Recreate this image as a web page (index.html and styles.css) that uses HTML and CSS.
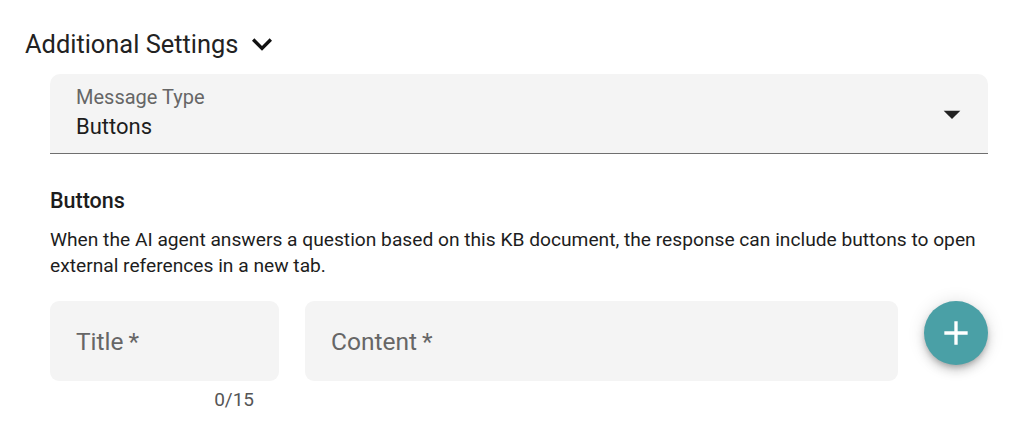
FILE: index.html
```html
<!DOCTYPE html>
<html>
<head>
<meta charset="utf-8">
<link rel="stylesheet" href="styles.css">
</head>
<body>
<div class="page">
  <div class="section-head">
    <span class="section-title">Additional Settings</span>
    <svg class="chev" width="24" height="24" viewBox="0 0 24 24"><path d="M7.41 8.59 12 13.17l4.59-4.58L18 10l-6 6-6-6z" fill="#111"/></svg>
  </div>
  <div class="content">
    <div class="select">
      <div class="select-text">
        <div class="select-label">Message Type</div>
        <div class="select-value">Buttons</div>
      </div>
      <svg class="select-arrow" width="24" height="24" viewBox="0 0 24 24"><path d="M7 10l5 5 5-5z" fill="#222"/></svg>
    </div>
    <h3 class="sub-title">Buttons</h3>
    <p class="desc">When the AI agent answers a question based on this KB document, the response can include buttons to open external references in a new tab.</p>
    <div class="row">
      <div class="col-title">
        <div class="field"><span class="ph">Title<span class="req">&thinsp;*</span></span></div>
        <div class="counter">0/15</div>
      </div>
      <div class="field field-content"><span class="ph">Content<span class="req">&thinsp;*</span></span></div>
      <button class="fab" type="button">
        <svg width="28" height="28" viewBox="0 0 24 24"><path d="M19 13h-6v6h-2v-6H5v-2h6V5h2v6h6z" fill="#fff"/></svg>
      </button>
    </div>
  </div>
</div>
</body>
</html>
```
FILE: styles.css
```css
html, body {
  margin: 0;
  padding: 0;
  background: #fff;
}
body {
  font-family: Roboto, "Liberation Sans", sans-serif;
  color: #222;
}
.page {
  padding: 26px 26px 0 25px;
}
.section-head {
  display: flex;
  align-items: center;
  gap: 4px;
  height: 36px;
}
.section-title {
  font-size: 25.4px;
  color: #222;
}
.chev {
  width: 40px;
  height: 40px;
}
.content {
  padding-left: 25px;
  margin-top: 12px;
}
.select {
  height: 79px;
  background: #f4f4f4;
  border-radius: 10px 10px 0 0;
  border-bottom: 1px solid #6f6f6f;
  display: flex;
  align-items: center;
  padding: 0 26px;
}
.select-text {
  flex: 1;
}
.select-label {
  font-size: 20px;
  color: #666;
  line-height: 26px;
  margin-top: -1px;
}
.select-value {
  font-size: 22px;
  color: #1d1d1d;
  line-height: 32px;
  margin-top: 1px;
}
.select-arrow {
  width: 40px;
  height: 40px;
  margin-right: -10px;
}
.sub-title {
  margin: 33px 0 0;
  font-size: 21.5px;
  font-weight: 500;
  color: #1d1d1d;
  line-height: 28px;
}
.desc {
  margin: 12px 0 0;
  font-size: 19.2px;
  line-height: 26px;
  color: #1d1d1d;
}
.row {
  display: flex;
  align-items: flex-start;
  gap: 26px;
  margin-top: 22px;
}
.col-title {
  width: 229px;
}
.field {
  height: 80px;
  background: #f4f4f4;
  border-radius: 9px;
  display: flex;
  align-items: center;
  padding: 0 26px;
  box-sizing: border-box;
}
.field-content {
  flex: 1;
}
.ph {
  font-size: 24.5px;
  color: #666;
}
.counter {
  text-align: right;
  padding-right: 25px;
  margin-top: 8px;
  font-size: 19px;
  color: #555;
  line-height: 22px;
}
.fab {
  width: 64px;
  height: 64px;
  border-radius: 50%;
  background: #4aa0a6;
  border: none;
  padding: 0;
  display: flex;
  align-items: center;
  justify-content: center;
  box-shadow: 0 3px 5px -1px rgba(0,0,0,0.2), 0 6px 10px 0 rgba(0,0,0,0.14), 0 1px 18px 0 rgba(0,0,0,0.12);
}
.fab svg {
  width: 40px;
  height: 40px;
}
```
